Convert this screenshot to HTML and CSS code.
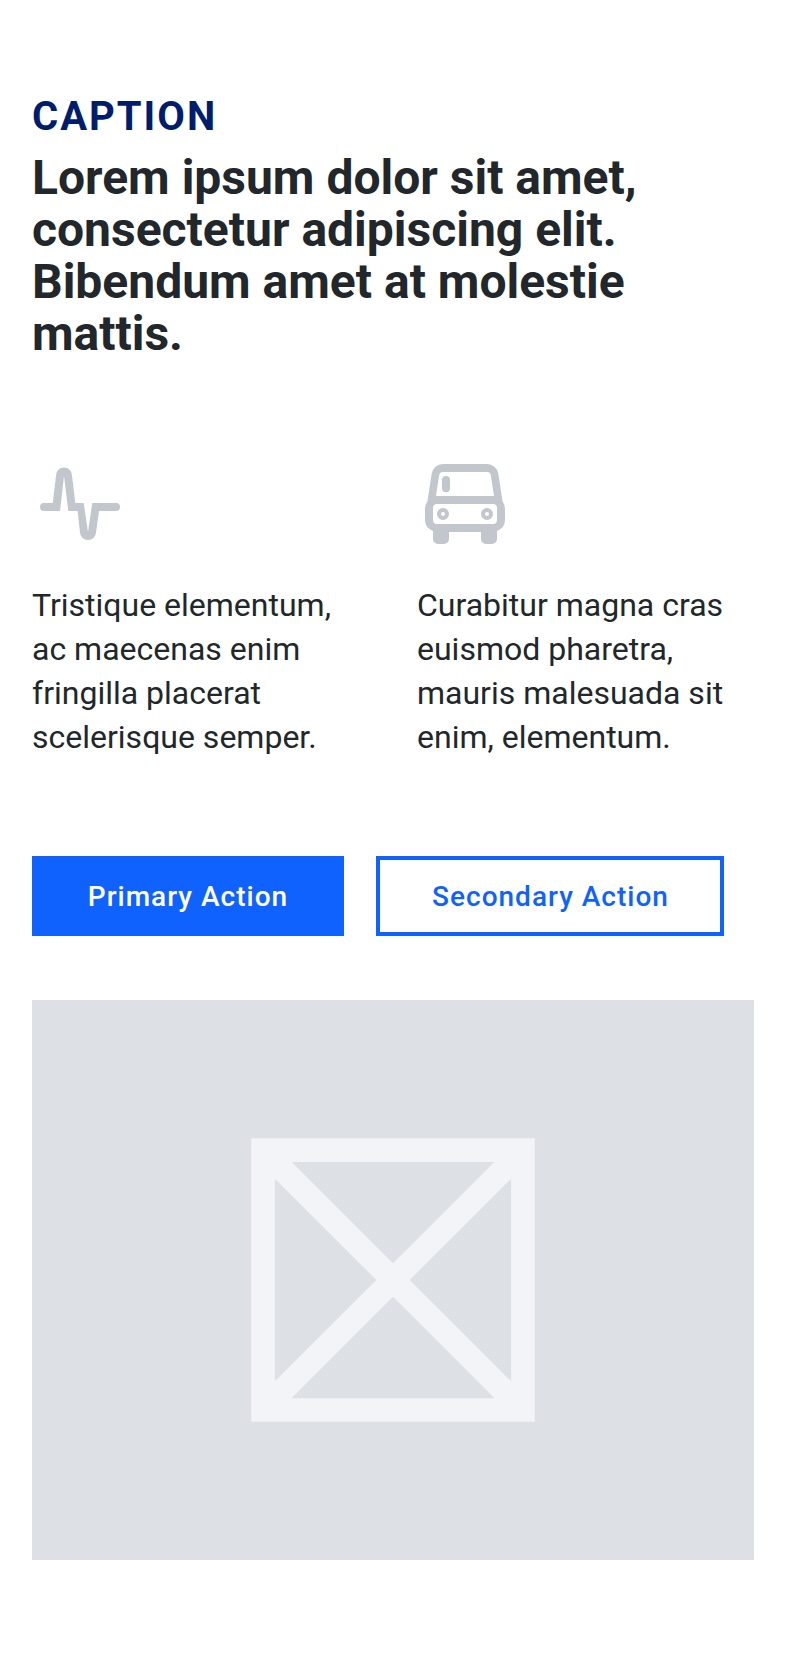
FILE: index.html
```html
<!DOCTYPE html>
<html lang="en">
<head>
<meta charset="utf-8">
<title>Caption</title>
<link rel="stylesheet" href="styles.css">
</head>
<body>
<main class="feature">
  <header class="intro">
    <p class="caption">CAPTION</p>
    <h1 class="title">Lorem ipsum dolor sit amet, consectetur adipiscing elit. Bibendum amet at molestie mattis.</h1>
  </header>
  <section class="benefits">
    <article class="benefit">
      <svg class="icon" viewBox="0 0 96 96" aria-hidden="true">
        <path d="M12 47H20.8L24 19.5a8 8 0 0 1 16 0L43.3 47H51.7L56 76 60.3 47H84a4 4 0 0 1 0 8H67L64 76.500a8 7.500 0 0 1-16 0L45.6 55H36.3L32 20 28 55H12a4 4 0 0 1 0-8Z"/>
      </svg>
      <p class="text">Tristique elementum, ac maecenas enim fringilla placerat scelerisque semper.</p>
    </article>
    <article class="benefit">
      <svg class="icon" viewBox="0 0 96 96" aria-hidden="true">
        <path fill-rule="evenodd" d="M26 8H70a11.5 11.5 0 0 1 11.3 9.8L85.6 45.5Q88 48.5 88 53V64q0 7.500-8 11V83a5 5 0 0 1-5 5H69a5 5 0 0 1-5-5V76H32V83a5 5 0 0 1-5 5H21a5 5 0 0 1-5-5V75Q8 71.500 8 64V53Q8 48.500 10.400 45.500L14.700 17.800A11.500 11.500 0 0 1 26 8ZM26 16a4 4 0 0 0-3.900 3.400L19 40H77L73.900 19.400A4 4 0 0 0 70 16ZM20 48a4 4 0 0 0-4 4V64a4 4 0 0 0 4 4H76a4 4 0 0 0 4-4V52a4 4 0 0 0-4-4Z"/>
        <rect x="25" y="20" width="8" height="16.300" rx="4"/>
        <path fill-rule="evenodd" d="M26 52a6 6 0 1 1 0 12 6 6 0 0 1 0-12Zm0 4a2 2 0 1 0 0 4 2 2 0 0 0 0-4ZM70 52a6 6 0 1 1 0 12 6 6 0 0 1 0-12Zm0 4a2 2 0 1 0 0 4 2 2 0 0 0 0-4Z"/>
      </svg>
      <p class="text">Curabitur magna cras euismod pharetra, mauris malesuada sit enim, elementum.</p>
    </article>
  </section>
  <div class="actions">
    <button class="button button-primary">Primary Action</button>
    <button class="button button-secondary">Secondary Action</button>
  </div>
  <div class="media">
    <svg class="media-icon" viewBox="0 0 24 24" aria-hidden="true">
      <path d="M3.750 3.750H20.250V20.250H3.750ZM3.750 3.750 20.250 20.250M20.250 3.750 3.750 20.250"/>
    </svg>
  </div>
</main>
</body>
</html>
```
FILE: styles.css
```css
* {
  box-sizing: border-box;
}

body {
  margin: 0;
  background: #fff;
  color: #21272a;
  font-family: Roboto, "Liberation Sans", sans-serif;
}

.feature {
  padding: 96px 32px;
}

.intro {
  display: flex;
  flex-direction: column;
  gap: 14px;
}

.caption {
  margin: 0;
  color: #001d6c;
  font-size: 40px;
  font-weight: 700;
  line-height: 42px;
  letter-spacing: 2px;
}

.title {
  margin: 0;
  max-width: 640px;
  font-size: 48px;
  font-weight: 700;
  line-height: 52px;
}

.benefits {
  display: grid;
  grid-template-columns: 1fr 1fr;
  gap: 48px;
  margin-top: 96px;
}

.benefit {
  display: flex;
  flex-direction: column;
  gap: 31px;
}

.icon {
  width: 96px;
  height: 96px;
  fill: #c1c7cd;
}

.text {
  margin: 0;
  font-size: 32px;
  line-height: 44px;
}

.actions {
  display: flex;
  gap: 32px;
  margin-top: 97px;
}

.button {
  height: 80px;
  padding: 2px 0 0;
  border: 4px solid #0f62fe;
  font: 500 28px/28px Roboto, "Liberation Sans", sans-serif;
  letter-spacing: 1px;
  white-space: nowrap;
}

.button-primary {
  width: 312px;
  background: #0f62fe;
  color: #fff;
}

.button-secondary {
  width: 348px;
  padding-left: 1px;
  background: transparent;
  color: #0f62fe;
}

.media {
  display: flex;
  align-items: center;
  justify-content: center;
  height: 560px;
  margin-top: 64px;
  background: #dde1e6;
}

.media-icon {
  width: 378px;
  height: 378px;
  fill: none;
  stroke: #f2f4f8;
  stroke-width: 1.5;
}
```
